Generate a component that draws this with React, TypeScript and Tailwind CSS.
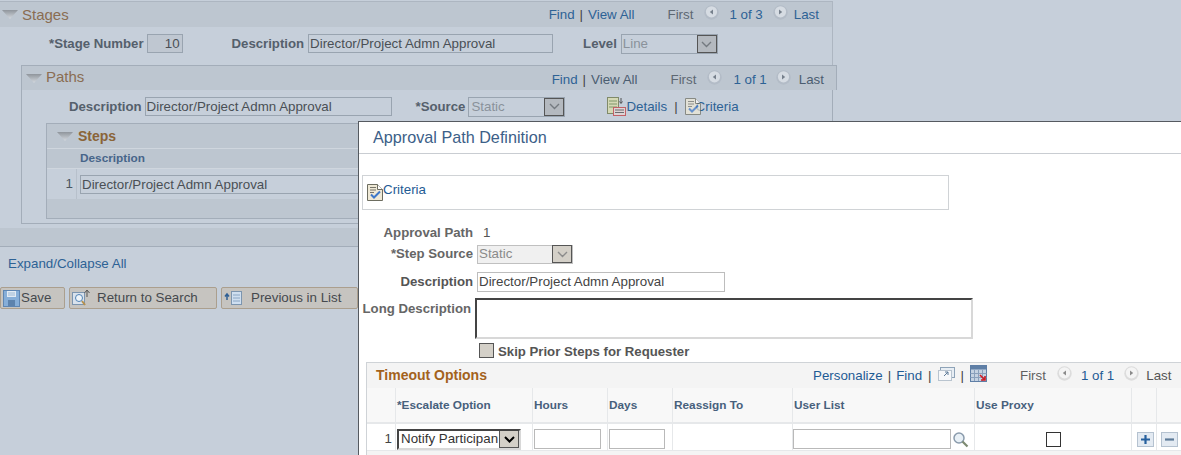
import type { ReactNode } from "react";

const Tri = () => (
  <svg width="16" height="9" viewBox="0 0 16 9" className="shrink-0">
    <defs>
      <linearGradient id="tri" x1="0" y1="0" x2="0" y2="1">
        <stop offset="0" stopColor="#8f959c" />
        <stop offset="1" stopColor="#d5dae0" />
      </linearGradient>
    </defs>
    <polygon points="0,0 16,0 8,9" fill="url(#tri)" />
  </svg>
);

const NavArrow = ({ dir, onWhite }: { dir: "l" | "r"; onWhite?: boolean }) => (
  <svg width="15" height="15" viewBox="0 0 15 15" className="mb-[4px] shrink-0">
    <circle cx="7.500" cy="7.500" r="7.200" fill={onWhite ? "#dcdcdc" : "#b3bcc7"} />
    <circle cx="7.500" cy="6.800" r="5.600" fill={onWhite ? "#f4f4f4" : "#d6dce3"} />
    <polygon points={dir === "l" ? "9,4.500 9,9.500 5.800,7" : "6,4.500 6,9.500 9.200,7"} fill={onWhite ? "#8b8b8b" : "#76808c"} />
  </svg>
);

const DropBtn = ({ mode = "back" }: { mode?: "back" | "off" | "on" }) => (
  <span
    className={`flex h-[18px] w-[20px] shrink-0 items-center justify-center border border-[#555] ${
      mode === "back" ? "bg-[#b4b9bf]" : "bg-[#d4d0c8]"
    }`}
  >
    <svg width="11" height="7" viewBox="0 0 11 7">
      <path
        d="M1 1l4.500 4.500L10 1"
        fill="none"
        stroke={mode === "on" ? "#000" : mode === "off" ? "#8c8c8c" : "#747a80"}
        strokeWidth={mode === "on" ? 2 : 1.400}
      />
    </svg>
  </span>
);

const CriteriaIcon = ({ dim }: { dim?: boolean }) => (
  <svg width="16" height="17" viewBox="0 0 16 17" className={`shrink-0 ${dim ? "opacity-70" : ""}`}>
    <path d="M.5.5h10l5 5v11H.5z" fill="#efe9d6" stroke="#6d6d60" />
    <path d="M10.500.5v5h5" fill="#fff" stroke="#6d6d60" />
    <path d="M3 3.500h6M3 6h6M3 8.500h4" stroke="#77756b" />
    <path d="M4 10.500l3 3 6-6" fill="none" stroke="#3f79c9" strokeWidth="2" />
  </svg>
);

const DetailsIcon = () => (
  <svg width="19" height="19" viewBox="0 0 19 19" className="shrink-0 opacity-80">
    <rect x=".5" y=".5" width="11" height="16" fill="#d9dcae" stroke="#6f7a4e" />
    <path d="M2 4h8M2 7h8M2 10h8" stroke="#6f8a4e" />
    <path d="M14 1v5M12.500 4.500l1.500 2 1.500-2" fill="none" stroke="#333" />
    <rect x="6.500" y="10.500" width="12" height="8" fill="#e4d6d6" stroke="#c2464a" />
    <path d="M8 13h9M8 15.500h9" stroke="#555" />
  </svg>
);

const Nav = ({ total, paths }: { total: string; paths?: boolean }) => (
  <div className={`flex items-center text-[13.33px] ${paths ? "pt-[3px]" : "pt-[1px]"}`}>
    <span className="text-[#2d6295]">Find</span>
    <span className="mx-[5px] text-[#444]">|</span>
    <span className={paths ? "text-[#4b5d70]" : "text-[#2d6295]"}>View All</span>
    <span className="ml-[33px] text-[#5d6873]">First</span>
    <span className="ml-[11px]">
      <NavArrow dir="l" />
    </span>
    <span className={`${paths ? "ml-[11px]" : "ml-[10px]"} text-[#2d6295]`}>{total}</span>
    <span className={paths ? "ml-[9px]" : "ml-[10px]"}>
      <NavArrow dir="r" />
    </span>
    <span className={paths ? "ml-[8px] text-[#4b5d70]" : "ml-[6px] text-[#2d6295]"}>Last</span>
  </div>
);

const FieldBox = ({ w, children }: { w: string; children?: ReactNode }) => (
  <span className={`flex ${w} h-[19px] items-center overflow-hidden border border-[#99a4b0] px-[1px] whitespace-nowrap text-[#4a4f55]`}>
    {children}
  </span>
);

const TopButton = ({ w, icon, label, pad }: { w: string; icon: ReactNode; label: string; pad: string }) => (
  <div className={`flex h-[22px] ${w} shrink-0 items-center rounded-[2px] border border-[#ab9f8e] bg-[#c6c4c0] pl-[2px] text-[#45494e]`}>
    {icon}
    <span className={pad}>{label}</span>
  </div>
);

const Th = ({ w, children }: { w: string; children?: ReactNode }) => (
  <div className={`flex ${w} h-full shrink-0 items-center border-r border-[#e6e8ea] pt-[1px] pl-[1px] text-[11.8px] font-bold text-[#47607c]`}>
    {children}
  </div>
);

const Td = ({ w, children, cls = "" }: { w: string; children?: ReactNode; cls?: string }) => (
  <div className={`flex ${w} h-full shrink-0 items-center border-r border-[#e6e8ea] pt-[4px] ${cls}`}>{children}</div>
);

const Input = ({ w }: { w: string }) => <span className={`block h-[20px] ${w} border border-[#b9b9b9] bg-white`} />;

const Label = ({ children, cls = "" }: { children: ReactNode; cls?: string }) => (
  <span className={`text-[13.2px] font-bold text-[#55606c] ${cls}`}>{children}</span>
);

export default function App() {
  return (
    <div className="relative h-[455px] w-[1181px] overflow-hidden bg-[#c6cfda] font-['Liberation_Sans',Arial,sans-serif] text-[13.33px]">
      {/* page behind the modal */}
      <div className="pt-px">
        <div className="w-[833px] border-t border-r border-[#adb6c1]">
          <div className="flex h-[25px] items-center justify-between bg-[#bdc6d0] pr-[13px] pl-[2px]">
            <div className="flex items-center gap-[4px]">
              <Tri />
              <span className="pt-[1px] text-[15px] text-[#8a6d52]">Stages</span>
            </div>
            <Nav total="1 of 3" />
          </div>
          <div className="flex h-[38px] items-start pt-[7px]">
            <Label cls="ml-[49px] leading-[19px]">*Stage Number</Label>
            <span className="ml-[3px] flex h-[19px] w-[36px] items-center justify-end border border-[#99a4b0] bg-[#bfc7d1] pr-[2px] text-[#4a4f55]">10</span>
            <Label cls="ml-[49px] leading-[19px]">Description</Label>
            <span className="ml-[4px]">
              <FieldBox w="w-[245px]">Director/Project Admn Approval</FieldBox>
            </span>
            <Label cls="ml-[30px] leading-[19px]">Level</Label>
            <span className="ml-[4px] flex h-[20px] w-[97px] items-center justify-between border border-[#99a4b0] pl-[1px] text-[#8a929b]">
              Line
              <DropBtn />
            </span>
          </div>
        </div>

        <div className="ml-[21px] h-[159px] w-[812px] border-r border-b border-l border-[#a3adb9]">
          <div className="flex h-[25px] w-[815px] items-center justify-between border-t border-r border-[#a3adb9] bg-[#bdc6d0] pr-[12px] pl-[4px]">
            <div className="flex items-center gap-[4px]">
              <Tri />
              <span className="pb-[1px] text-[15px] text-[#8a6d52]">Paths</span>
            </div>
            <Nav total="1 of 1" paths />
          </div>
          <div className="flex h-[33px] items-center">
            <Label cls="ml-[47px]">Description</Label>
            <span className="ml-[3px]">
              <FieldBox w="w-[247px]">Director/Project Admn Approval</FieldBox>
            </span>
            <Label cls="ml-[24px]">*Source</Label>
            <span className="ml-[3px] flex h-[20px] w-[97px] items-center justify-between border border-[#99a4b0] pl-[2px] text-[#8a929b]">
              Static
              <DropBtn />
            </span>
            <span className="ml-[42px] flex items-center text-[#2d6295]">
              <DetailsIcon />
              Details
            </span>
            <span className="mx-[7px] text-[#444]">|</span>
            <span className="flex items-center text-[#2d6295]">
              <CriteriaIcon dim />
              <span className="-ml-[5px]">Criteria</span>
            </span>
          </div>
          <div className="ml-[24px] w-[780px] border border-[#a3adb9]">
            <div className="flex h-[25px] items-center gap-[5px] border-b border-[#cfd6de] bg-[#bdc6d0] pl-[10px]">
              <Tri />
              <span className="text-[14px] font-bold text-[#8a6438]">Steps</span>
            </div>
            <div className="flex h-[20px] items-center border-b border-[#cfd6de] bg-[#bdc6d0] pt-[1px] pl-[33px] text-[11.8px] font-bold text-[#47658a]">
              Description
            </div>
            <div className="flex h-[30px] items-center">
              <span className="w-[30px] border-r border-[#b7c0cb] pr-[3px] text-right leading-[30px] text-[#4a5561]">1</span>
              <span className="ml-[3px] pt-[1px]">
                <FieldBox w="w-[300px]">Director/Project Admn Approval</FieldBox>
              </span>
            </div>
            <div className="h-[19px] bg-[#bdc6d0]" />
          </div>
        </div>

        <div className="mt-[4px] h-[19px] border-b border-[#a3adb9] bg-[#bdc6d0]" />
        <div className="pt-[9px] pl-[8px] leading-[15px] text-[#2d6295]">Expand/Collapse All</div>
        <div className="mt-[16px] flex gap-[4px]">
          <TopButton
            w="w-[65px]"
            pad="ml-[1px]"
            label="Save"
            icon={
              <svg width="17" height="17" viewBox="0 0 17 17">
                <rect x=".5" y=".5" width="16" height="16" fill="#86aed8" stroke="#5e86b3" />
                <rect x="4" y="1" width="9" height="6" fill="#e2ebf4" />
                <path d="M5 3h7M5 5h7" stroke="#9db8d4" />
                <rect x="5" y="10" width="7" height="6" fill="#5d83ad" />
              </svg>
            }
          />
          <TopButton
            w="w-[148px]"
            pad="ml-[6px]"
            label="Return to Search"
            icon={
              <svg width="19" height="18" viewBox="0 0 19 18">
                <rect x=".5" y="3.500" width="12" height="12" fill="#d9e2ec" stroke="#7c95af" />
                <circle cx="7" cy="9" r="3.500" fill="#eef4f9" stroke="#4f82b5" />
                <path d="M10 12l3 4" stroke="#b7924f" strokeWidth="2" />
                <path d="M15 8V2M12.500 4L15 1l2.500 3" fill="none" stroke="#555" />
              </svg>
            }
          />
          <TopButton
            w="w-[137px]"
            pad="ml-[8px]"
            label="Previous in List"
            icon={
              <svg width="19" height="18" viewBox="0 0 19 18">
                <rect x="7.500" y="2.500" width="10" height="13" fill="#cfdff0" stroke="#7c95af" />
                <path d="M9 6h7M9 9h7M9 12h7" stroke="#8aa6c4" />
                <path d="M3 11V6M1 7.500L3 5l2 2.500" fill="none" stroke="#2f5f94" strokeWidth="1.500" />
              </svg>
            }
          />
        </div>
      </div>

      {/* modal */}
      <div className="absolute top-[121px] left-[358px] h-[340px] w-[830px] border-t border-l border-[#555a60] bg-white">
        <div className="h-[32px] border-b border-[#c9cdd2] pt-[6px] pl-[14px] text-[16.2px] leading-[18px] text-[#3c6088]">
          Approval Path Definition
        </div>
        <div className="mt-[21px] ml-[3px] flex h-[35px] w-[587px] items-center border border-[#d0d3d6] pl-[4px]">
          <CriteriaIcon />
          <span className="mb-[6px] text-[#1f5b94]">Criteria</span>
        </div>
        <div className="mt-[14px] flex h-[18px] items-center">
          <Label cls="w-[114px] text-right !text-[#666]">Approval Path</Label>
          <span className="ml-[10px] text-[#555]">1</span>
        </div>
        <div className="mt-[1px] flex h-[22px] items-center">
          <Label cls="w-[114px] text-right !text-[#666]">*Step Source</Label>
          <span className="ml-[4px] flex h-[19px] w-[96px] items-center justify-between border border-[#c0c0c0] bg-[#f0f0f0] pl-[1px] text-[#8a8a8a]">
            Static
            <DropBtn mode="off" />
          </span>
        </div>
        <div className="mt-[7px] flex h-[20px] items-center">
          <Label cls="w-[114px] text-right !text-[#555]">Description</Label>
          <span className="ml-[4px] flex h-[20px] w-[248px] items-center border border-[#bdbdbd] pl-[1px] text-[#444]">
            Director/Project Admn Approval
          </span>
        </div>
        <div className="mt-[6px] flex">
          <Label cls="w-[112px] pt-[2px] text-right leading-[18px] !text-[#666]">Long Description</Label>
          <span className="ml-[4px] block h-[41px] w-[498px] border-2 border-t-[#444] border-r-[#d8d8d8] border-b-[#d8d8d8] border-l-[#444] bg-white" />
        </div>
        <div className="mt-[3px] ml-[120px] flex h-[16px] items-center">
          <span className="mr-[4px] block h-[15px] w-[15px] border border-[#555] bg-[#d4d0c8]" />
          <Label cls="pt-[3px] !text-[#555]">Skip Prior Steps for Requester</Label>
        </div>

        <div className="mt-[4px] ml-[7px] w-[830px] border-t border-l border-[#cfd3d7]">
          <div className="flex h-[25px] items-center bg-[#f4f4f4] pl-[9px]">
            <span className="w-[437px] text-[14px] font-bold text-[#a3621c]">Timeout Options</span>
            <span className="pt-[1px] text-[#1f5b94]">Personalize</span>
            <span className="mx-[5px] pt-[1px] text-[#444]">|</span>
            <span className="pt-[1px] text-[#1f5b94]">Find</span>
            <span className="mx-[6px] pt-[1px] text-[#444]">|</span>
            <svg width="17" height="14" viewBox="0 0 17 14" className="mb-[4px]">
              <rect x="2.500" y=".5" width="14" height="10" fill="#e8eef4" stroke="#8ea3b8" />
              <rect x=".5" y="3.500" width="13" height="10" fill="#f6f8fa" stroke="#b9c4cf" />
              <path d="M6 9l4-4M7 5h3v3" fill="none" stroke="#5d7a98" />
            </svg>
            <span className="mx-[6px] pt-[1px] text-[#444]">|</span>
            <svg width="17" height="17" viewBox="0 0 17 17" className="mb-[4px]">
              <rect x=".5" y=".5" width="16" height="16" fill="#c5d2e2" stroke="#5f7fa6" />
              <rect x=".5" y=".5" width="16" height="4" fill="#5f7fa6" />
              <path d="M.5 8.500h16M.5 12.500h16M4.500 5v11M8.500 5v11M12.500 5v11" stroke="#8aa0bc" />
              <path d="M10 10l5 5M15 11v4h-4" fill="none" stroke="#d01b24" strokeWidth="1.600" />
            </svg>
            <span className="ml-[33px] pt-[1px] text-[#5f5f5f]">First</span>
            <span className="ml-[11px]">
              <NavArrow dir="l" onWhite />
            </span>
            <span className="ml-[9px] pt-[1px] text-[#1f5b94]">1 of 1</span>
            <span className="ml-[10px]">
              <NavArrow dir="r" onWhite />
            </span>
            <span className="ml-[7px] pt-[1px] text-[#555]">Last</span>
          </div>
          <div className="flex h-[36px] border-b-[2px] border-[#e6e8ea] bg-[#f8f8f8]">
            <Th w="w-[29px]" />
            <Th w="w-[137px]">*Escalate Option</Th>
            <Th w="w-[75px]">Hours</Th>
            <Th w="w-[65px]">Days</Th>
            <Th w="w-[120px]">Reassign To</Th>
            <Th w="w-[182px]">User List</Th>
            <Th w="w-[157px]">Use Proxy</Th>
            <Th w="w-[25px]" />
          </div>
          <div className="flex h-[27px] border-b border-[#e6e8ea] bg-white">
            <Td w="w-[29px]" cls="justify-end pr-[3px] text-[#444]">1</Td>
            <Td w="w-[137px]" cls="pl-[1px]">
              <span className="flex h-[21px] w-[124px] items-center justify-between overflow-hidden border-2 border-t-[#444] border-r-[#d8d8d8] border-b-[#d8d8d8] border-l-[#444] bg-white text-[#333]">
                <span className="w-[99px] overflow-hidden pl-[2px] whitespace-nowrap">Notify Participant</span>
                <DropBtn mode="on" />
              </span>
            </Td>
            <Td w="w-[75px]" cls="pl-[1px]"><Input w="w-[67px]" /></Td>
            <Td w="w-[65px]" cls="pl-[1px]"><Input w="w-[56px]" /></Td>
            <Td w="w-[120px]" />
            <Td w="w-[182px]">
              <Input w="w-[158px]" />
              <svg width="17" height="17" viewBox="0 0 17 17" className="ml-[1px]">
                <circle cx="7" cy="7" r="5" fill="#e8f0f6" stroke="#8a9bac" strokeWidth="1.500" />
                <path d="M10.500 10.500l5 5" stroke="#7d8a72" strokeWidth="2.200" />
              </svg>
            </Td>
            <Td w="w-[157px]" cls="justify-center">
              <span className="block h-[15px] w-[15px] border border-[#333] bg-white" />
            </Td>
            <Td w="w-[25px]" cls="justify-center pl-[3px]">
              <svg width="17" height="15" viewBox="0 0 17 15">
                <rect x=".5" y=".5" width="16" height="14" fill="#e3eaf2" stroke="#b5c2d0" />
                <path d="M8.500 3v9M4 7.500h9" stroke="#26609e" strokeWidth="2.200" />
              </svg>
            </Td>
            <Td w="w-[25px]" cls="justify-center border-r-0">
              <svg width="17" height="15" viewBox="0 0 17 15">
                <rect x=".5" y=".5" width="16" height="14" fill="#e3eaf2" stroke="#b5c2d0" />
                <path d="M4 7.500h9" stroke="#5d7a98" strokeWidth="2.200" />
              </svg>
            </Td>
          </div>
          <div className="h-[6px] bg-[#f4f4f4]" />
        </div>
      </div>
    </div>
  );
}
